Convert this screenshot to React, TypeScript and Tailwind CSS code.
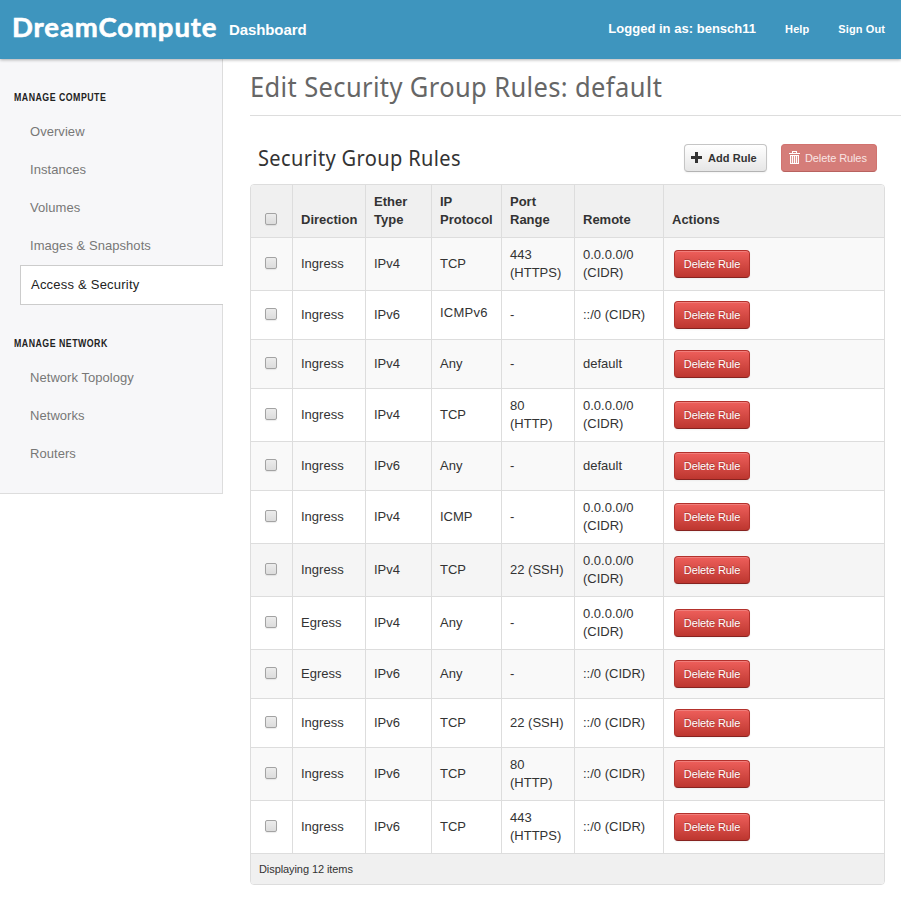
import React from "react";

type Rule = {
  direction: string;
  ether: string;
  protocol: string;
  port: string[];
  remote: string[];
  tall: boolean;
  hover?: boolean;
};

const ANY = ["0.0.0.0/0", "(CIDR)"];
const ANY6 = ["::/0 (CIDR)"];

const rules: Rule[] = [
  { direction: "Ingress", ether: "IPv4", protocol: "TCP", port: ["443", "(HTTPS)"], remote: ANY, tall: true },
  { direction: "Ingress", ether: "IPv6", protocol: "ICMPv6", port: ["-"], remote: ANY6, tall: false },
  { direction: "Ingress", ether: "IPv4", protocol: "Any", port: ["-"], remote: ["default"], tall: false },
  { direction: "Ingress", ether: "IPv4", protocol: "TCP", port: ["80", "(HTTP)"], remote: ANY, tall: true },
  { direction: "Ingress", ether: "IPv6", protocol: "Any", port: ["-"], remote: ["default"], tall: false },
  { direction: "Ingress", ether: "IPv4", protocol: "ICMP", port: ["-"], remote: ANY, tall: true },
  { direction: "Ingress", ether: "IPv4", protocol: "TCP", port: ["22 (SSH)"], remote: ANY, tall: true, hover: true },
  { direction: "Egress", ether: "IPv4", protocol: "Any", port: ["-"], remote: ANY, tall: true },
  { direction: "Egress", ether: "IPv6", protocol: "Any", port: ["-"], remote: ANY6, tall: false },
  { direction: "Ingress", ether: "IPv6", protocol: "TCP", port: ["22 (SSH)"], remote: ANY6, tall: false },
  { direction: "Ingress", ether: "IPv6", protocol: "TCP", port: ["80", "(HTTP)"], remote: ANY6, tall: true },
  { direction: "Ingress", ether: "IPv6", protocol: "TCP", port: ["443", "(HTTPS)"], remote: ANY6, tall: true },
];

const GRID = "grid grid-cols-[42px_73px_66px_70px_73px_89px_1fr] border-b border-[#dddddd]";

function Check() {
  return (
    <span className="block h-3 w-3 rounded-[2px] border border-[#a3a3a3] bg-linear-to-b from-[#ececec] to-[#dcdcdc] shadow-[0_1px_1px_rgba(0,0,0,0.08)]" />
  );
}

function Lines({ text }: { text: string[] }) {
  return (
    <div>
      {text.map((t) => (
        <div key={t} className="whitespace-nowrap">{t}</div>
      ))}
    </div>
  );
}

function Cell({ children, className = "" }: { children: React.ReactNode; className?: string }) {
  return <div className={`flex items-center border-r border-[#dddddd] pl-2 ${className}`}>{children}</div>;
}

function HeadCell({ text }: { text: string[] }) {
  return (
    <div className="flex items-end border-r border-[#dddddd] pb-2 pl-2 last:border-r-0">
      <Lines text={text} />
    </div>
  );
}

function Row({ rule, index }: { rule: Rule; index: number }) {
  const bg = rule.hover ? "bg-[#f5f5f5]" : index % 2 === 0 ? "bg-[#f9f9f9]" : "bg-white";
  return (
    <div className={`${GRID} ${bg} ${rule.tall ? "h-[53px]" : "h-[49px]"}`}>
      <div className="flex items-center border-r border-[#dddddd] pb-[2px] pl-[14px]"><Check /></div>
      <Cell>{rule.direction}</Cell>
      <Cell>{rule.ether}</Cell>
      <Cell className={rule.protocol === "ICMPv6" ? "pb-1 tracking-[0.25px]" : ""}>{rule.protocol}</Cell>
      <Cell><Lines text={rule.port} /></Cell>
      <Cell><Lines text={rule.remote} /></Cell>
      <div className="flex items-center pl-[10px]">
        <button className="h-7 w-[76px] rounded-[4px] border border-[#b3312c] border-b-[#872320] bg-linear-to-b from-[#ee5f5b] to-[#bd362f] text-[11px] leading-[18px] tracking-[-0.1px] text-white shadow-[inset_0_1px_0_rgba(255,255,255,0.2),0_1px_2px_rgba(0,0,0,0.05)] [text-shadow:0_-1px_0_rgba(0,0,0,0.25)]">
          Delete Rule
        </button>
      </div>
    </div>
  );
}

function NavGroup({ title, items, active }: { title: string; items: string[]; active?: string }) {
  return (
    <div>
      <h4 className="h-[15px] pl-[14px] leading-[15px] font-bold text-[#222222]">
        <span className="inline-block origin-left scale-x-[0.88] align-top whitespace-nowrap text-[10px] tracking-[0.55px]">{title}</span>
      </h4>
      <ul className="pt-2">
        {items.map((item) =>
          item === active ? (
            <li key={item} className="-mr-px ml-5 h-10 border border-r-0 border-[#cccccc] bg-white pl-[10px] leading-[38px] tracking-[0.22px] text-[#222222]">{item}</li>
          ) : (
            <li key={item} className="h-[38px] pl-[30px] leading-[38px]">{item}</li>
          )
        )}
      </ul>
    </div>
  );
}

export default function App() {
  return (
    <div className="h-[897px] w-[901px] overflow-hidden bg-white font-['Liberation_Sans',Arial,sans-serif] text-[13px] leading-[18px] text-[#333333]">
      <header className="relative flex h-[59px] items-center bg-[#3e95be] font-bold text-white shadow-[0_1px_3px_rgba(0,0,0,0.3)]">
        <div className="w-[229px] pb-[5px] pl-3">
          <span className="inline-block whitespace-nowrap font-['Lato',sans-serif] text-[27.5px] leading-[34px] font-bold tracking-[0.9px] [-webkit-text-stroke:0.6px_white]">DreamCompute</span>
        </div>
        <span className="text-[15px] tracking-[-0.1px]">Dashboard</span>
        <div className="ml-auto flex items-center pr-4 pb-[2px]">
          <span className="tracking-[0.02px]">Logged in as: bensch11</span>
          <a className="ml-[29px] text-[11px] tracking-[0.1px]">Help</a>
          <a className="ml-[29px] text-[11px] tracking-[0.1px]">Sign Out</a>
        </div>
      </header>

      <div className="flex items-start">
        <aside className="h-[435px] w-[223px] shrink-0 border-r border-b border-[#dddddd] bg-[#f7f7f9] pt-[31px] tracking-[0.05px] text-[#777777]">
          <NavGroup title="MANAGE COMPUTE" items={["Overview", "Instances", "Volumes", "Images & Snapshots", "Access & Security"]} active="Access & Security" />
          <div className="h-[31px]" />
          <NavGroup title="MANAGE NETWORK" items={["Network Topology", "Networks", "Routers"]} />
        </aside>

        <main className="ml-[27px] w-[651px]">
          <h1 className="h-[57px] border-b border-[#dddddd] pt-[9px] text-[#666666]">
            <span className="inline-block origin-left scale-x-[0.91] whitespace-nowrap font-['Noto_Sans',sans-serif] text-[28px] leading-9 tracking-[0.42px]">Edit Security Group Rules: default</span>
          </h1>
          <div className="w-[635px]">
            <div className="flex h-[68px] items-start pt-7 pr-2 pl-2">
              <h2 className="-mt-px w-[426px] text-[#333333]">
                <span className="inline-block origin-left scale-x-[0.91] whitespace-nowrap font-['Noto_Sans',sans-serif] text-[22px] leading-[28px] tracking-[0.4px]">Security Group Rules</span>
              </h2>
              <button className="flex h-7 w-[83px] shrink-0 items-center rounded-[4px] border border-[#c5c5c5] border-b-[#b3b3b3] bg-linear-to-b from-white to-[#e6e6e6] pl-[6px] text-[11px] font-bold shadow-[0_1px_2px_rgba(0,0,0,0.05)]">
                <svg className="mr-[6px] mb-[2px]" width="11" height="11" viewBox="0 0 11 11"><path d="M4 0h3v4h4v3H7v4H4V7H0V4h4z" fill="#333" /></svg>
                <span className="tracking-[0.05px]">Add Rule</span>
              </button>
              <button className="ml-[14px] flex h-7 w-24 shrink-0 items-center rounded-[4px] border border-[#d1736f] border-b-[#b8625f] bg-[#d57d79] pl-[7px] text-[11px] text-[#f9e5e4]">
                <svg className="mr-[5px] mb-px" width="11" height="13" viewBox="0 0 11 13">
                  <path d="M3 0h5v2h3v1H0V2h3zM4 1v1h3V1zM1 4h9v9H1z" fill="#fff" fillRule="evenodd" />
                  <path d="M2.5 5v7M4.5 5v7M6.5 5v7M8.5 5v7" stroke="#d57d79" strokeWidth="0.8" />
                </svg>
                <span className="tracking-[-0.1px]">Delete Rules</span>
              </button>
            </div>
            <div className="overflow-hidden rounded-[4px] border border-[#dddddd]">
              <div className={`${GRID} h-[53px] bg-[#f0f0f0] font-bold`}>
                <div className="flex items-end border-r border-[#dddddd] pb-3 pl-[14px]"><Check /></div>
                <HeadCell text={["Direction"]} />
                <HeadCell text={["Ether", "Type"]} />
                <HeadCell text={["IP", "Protocol"]} />
                <HeadCell text={["Port", "Range"]} />
                <HeadCell text={["Remote"]} />
                <HeadCell text={["Actions"]} />
              </div>
              {rules.map((rule, i) => (
                <Row key={i} rule={rule} index={i} />
              ))}
              <div className="h-[30px] bg-[#f0f0f0] pl-2 text-[11px] leading-[30px] tracking-[-0.08px]">Displaying 12 items</div>
            </div>
          </div>
        </main>
      </div>
    </div>
  );
}
